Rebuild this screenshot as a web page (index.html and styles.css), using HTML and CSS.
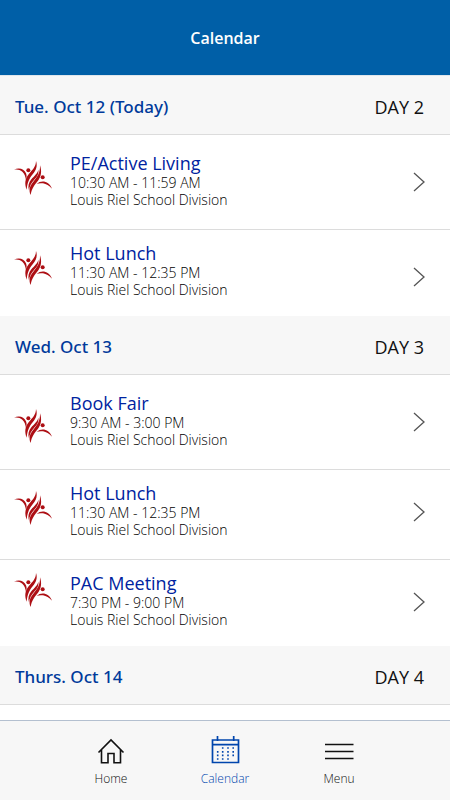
FILE: index.html
```html
<!DOCTYPE html>
<html lang="en">
<head>
<meta charset="utf-8">
<meta name="viewport" content="width=device-width, initial-scale=1">
<title>Calendar</title>
<link rel="stylesheet" href="styles.css">
</head>
<body>
<svg class="defs" aria-hidden="true">
  <symbol id="logo" viewBox="0 0 114 102">
    <path d="M0 26C15 19 30 23 36 37C39 44 38 50 36 57C34 46 32 38 25 32C18 26 10 24 0 26Z"/>
    <circle cx="43" cy="28" r="6"/>
    <path d="M66 0C71 14 67 27 56 40C46 52 40 64 38 86C31 68 33 54 44 40C55 26 66 18 66 0Z"/>
    <path d="M73 26C75 38 69 47 60 57C52 66 47 74 45 88C41 75 44 65 52 55C61 44 71 37 73 26Z"/>
    <path d="M78 13C84 31 82 46 72 59C62 71 53 82 50 102C43 86 48 74 58 62C69 49 79 37 78 13Z"/>
    <circle cx="86" cy="49" r="6"/>
    <path d="M68 69C82 56 105 60 114 83C105 74 97 69 87 67C79 66 73 67 68 69Z"/>
  </symbol>
  <symbol id="chevron" viewBox="0 0 12 20">
    <path d="M1 1L11 10L1 19" fill="none" stroke="#555" stroke-width="1.3"/>
  </symbol>
</svg>

<header class="topbar"><h1>Calendar</h1></header>

<main class="agenda">
  <section>
    <header class="day"><h2>Tue. Oct 12 (Today)</h2><span>DAY 2</span></header>
    <ul class="events">
      <li><a class="event" href="#">
        <span class="lead"><svg class="logo"><use href="#logo"/></svg></span>
        <span class="info"><strong>PE/Active Living</strong><span>10:30 AM - 11:59 AM</span><span class="place">Louis Riel School Division</span></span>
        <svg class="chevron"><use href="#chevron"/></svg>
      </a></li>
      <li><a class="event" href="#">
        <span class="lead"><svg class="logo"><use href="#logo"/></svg></span>
        <span class="info"><strong>Hot Lunch</strong><span>11:30 AM - 12:35 PM</span><span class="place">Louis Riel School Division</span></span>
        <svg class="chevron low"><use href="#chevron"/></svg>
      </a></li>
    </ul>
  </section>
  <section>
    <header class="day"><h2>Wed. Oct 13</h2><span>DAY 3</span></header>
    <ul class="events">
      <li><a class="event" href="#">
        <span class="lead bottom"><svg class="logo"><use href="#logo"/></svg></span>
        <span class="info"><strong>Book Fair</strong><span>9:30 AM - 3:00 PM</span><span class="place">Louis Riel School Division</span></span>
        <svg class="chevron"><use href="#chevron"/></svg>
      </a></li>
      <li><a class="event" href="#">
        <span class="lead"><svg class="logo"><use href="#logo"/></svg></span>
        <span class="info"><strong>Hot Lunch</strong><span>11:30 AM - 12:35 PM</span><span class="place">Louis Riel School Division</span></span>
        <svg class="chevron"><use href="#chevron"/></svg>
      </a></li>
      <li><a class="event" href="#">
        <span class="lead top"><svg class="logo"><use href="#logo"/></svg></span>
        <span class="info"><strong>PAC Meeting</strong><span>7:30 PM - 9:00 PM</span><span class="place">Louis Riel School Division</span></span>
        <svg class="chevron"><use href="#chevron"/></svg>
      </a></li>
    </ul>
  </section>
  <section>
    <header class="day"><h2>Thurs. Oct 14</h2><span>DAY 4</span></header>
  </section>
</main>

<nav class="tabs">
  <a href="#">
    <svg viewBox="0 0 30 30"><path d="M2.500 17.500L15 5L27.500 17.500M5.500 15V27.700H12V18.500H18V27.700H24.500V15" fill="none" stroke="currentColor" stroke-width="1.600"/></svg>
    <span>Home</span>
  </a>
  <a class="active" href="#" aria-current="page">
    <svg viewBox="0 0 30 30">
      <path d="M2.500 5H28.500V27.500H2.500ZM2 9.700H29M7.500 1V6M23.700 1V6" fill="none" stroke="currentColor" stroke-width="1.700"/>
      <path d="M11.900 13H13.500M17.200 13H18.800M22.400 13H24M6.900 16.800H8.500M11.900 16.800H13.500M17.200 16.800H18.800M22.400 16.800H24M6.900 20.400H8.500M11.900 20.400H13.500M17.200 20.400H18.800M22.400 20.400H24M6.900 24H8.500M11.900 24H13.500M17.200 24H18.800" fill="none" stroke="currentColor" stroke-width="1.700"/>
    </svg>
    <span>Calendar</span>
  </a>
  <a href="#">
    <svg viewBox="0 0 30 30"><path d="M1 9.500H29.500M1 16.500H29.500M1 23.500H29.500" fill="none" stroke="currentColor" stroke-width="1.400"/></svg>
    <span>Menu</span>
  </a>
</nav>
</body>
</html>
```
FILE: styles.css
```css
* { box-sizing: border-box; }

body {
  margin: 0;
  height: 100vh;
  display: flex;
  flex-direction: column;
  background: #fff;
  color: #111;
  font-family: "Open Sans", "Noto Sans", sans-serif;
}

h1, h2, ul { margin: 0; padding: 0; }
ul { list-style: none; }
a { color: inherit; text-decoration: none; }
.defs { position: absolute; width: 0; height: 0; }

.topbar {
  flex: none;
  height: 76px;
  display: flex;
  align-items: center;
  justify-content: center;
  background: #005fa7;
  border-bottom: 1px solid #dfe6ec;
  color: #fff;
}
.topbar h1 { font-size: 16px; line-height: 24px; font-weight: 600; }

.agenda { flex: 1; min-height: 0; overflow: hidden; }

.day {
  height: 59px;
  padding: 4px 26px 0 15px;
  display: flex;
  align-items: center;
  justify-content: space-between;
  background: #f7f7f7;
  border-bottom: 1px solid #dcdcdc;
  font-size: 18px;
  line-height: 24px;
}
.day h2 {
  font-family: "Noto Sans", "Open Sans", sans-serif;
  font-size: 17px;
  font-weight: 500;
  color: #003a9b;
}

.event {
  display: flex;
  align-items: flex-start;
  padding: 13px 25px 21px 14px;
}
.events li { border-bottom: 1px solid #dcdcdc; }
.events li:first-child { padding-top: 5px; }
.events li:last-child { border-bottom: 0; }
.events li:last-child .event { padding-bottom: 18px; }

.lead { width: 56px; height: 50px; display: flex; align-items: center; }
.lead.top { align-items: flex-start; }
.lead.bottom { align-items: flex-end; }
.logo { width: 38px; height: 34px; fill: #ad0f14; }

.info { flex: 1; display: flex; flex-direction: column; font-size: 14px; line-height: 17px; font-weight: 300; }
.info strong { font-size: 18px; line-height: 21px; font-weight: 400; color: #0023a0; }
.info span { color: #000; }

.chevron { width: 12px; height: 20px; margin-top: 19px; }
.chevron.low { margin-top: 24px; }

.tabs {
  flex: none;
  height: 80px;
  padding: 14px 12% 0;
  display: flex;
  background: #f7f7f7;
  border-top: 1px solid #b4c0d0;
}
.tabs a {
  flex: 1;
  display: flex;
  flex-direction: column;
  align-items: center;
  gap: 5px;
  font-size: 12px;
  line-height: 18px;
  font-weight: 300;
}
.tabs svg { width: 30px; height: 30px; }
.tabs .active { color: #0045ad; }
```
